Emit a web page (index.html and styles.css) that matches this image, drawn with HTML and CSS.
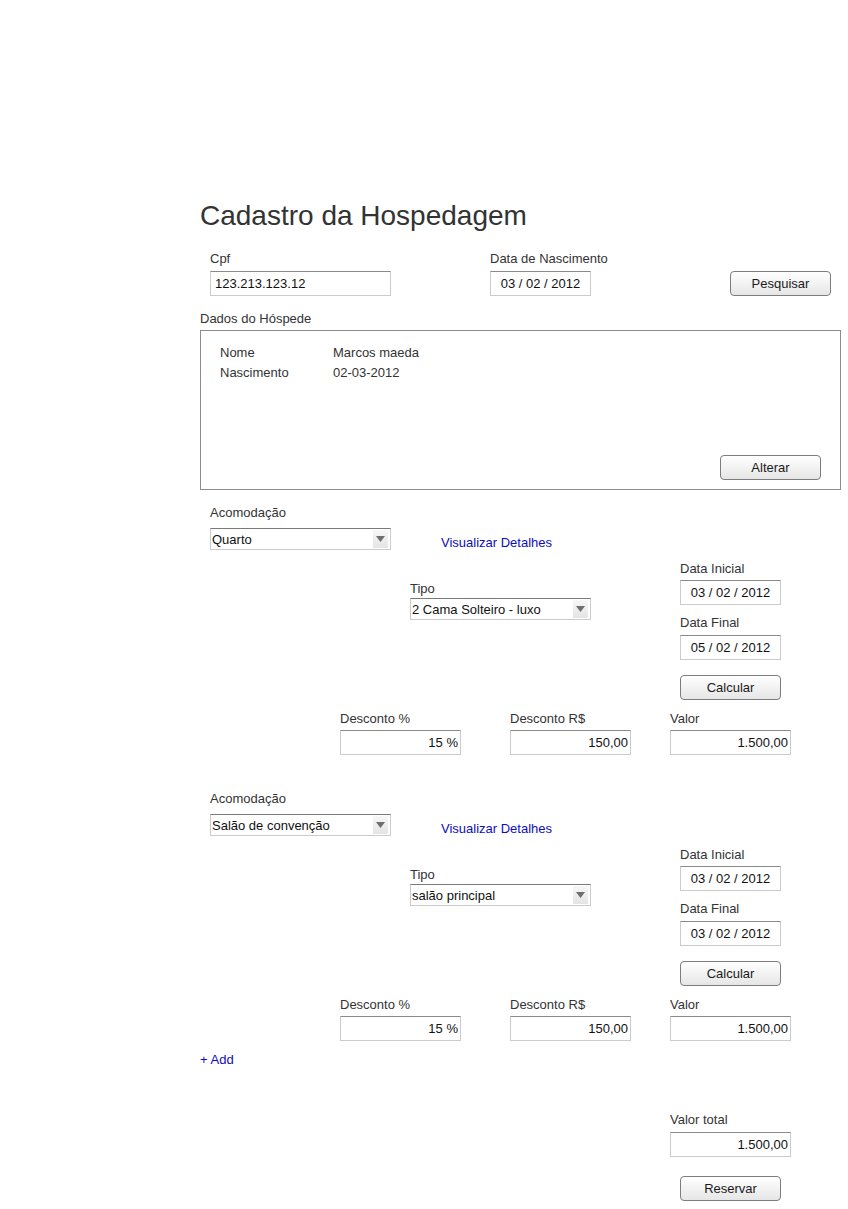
FILE: index.html
```html
<!DOCTYPE html>
<html lang="pt-BR">
<head>
<meta charset="utf-8">
<title>Cadastro da Hospedagem</title>
<link rel="stylesheet" href="styles.css">
</head>
<body>
<div class="page">
  <h1 class="title">Cadastro da Hospedagem</h1>

  <div class="search-row">
    <div class="field f-cpf">
      <div class="lbl lbl-top">Cpf</div>
      <div class="input w-cpf">123.213.123.12</div>
    </div>
    <div class="field f-nasc">
      <div class="lbl lbl-top">Data de Nascimento</div>
      <div class="input date">03 / 02 / 2012</div>
    </div>
    <button class="btn">Pesquisar</button>
  </div>

  <div class="lbl guest-lbl">Dados do Hóspede</div>
  <div class="guest-box">
    <div class="guest-data">
      <span>Nome</span><span>Marcos maeda</span>
      <span>Nascimento</span><span>02-03-2012</span>
    </div>
    <button class="btn btn-end">Alterar</button>
  </div>

  <section class="acc acc-first">
    <div class="acc-top">
      <div class="field">
        <div class="lbl lbl-sel">Acomodação</div>
        <div class="select w-sel"><span>Quarto</span><span class="arrow"><svg width="9" height="6" viewBox="0 0 9 6"><polygon points="0,0 9,0 4.5,6" fill="#6e6e6e"/></svg></span></div>
      </div>
      <a class="link details">Visualizar Detalhes</a>
    </div>
    <div class="acc-mid">
      <div class="field f-tipo">
        <div class="lbl lbl-tipo">Tipo</div>
        <div class="select w-sel"><span>2 Cama Solteiro - luxo</span><span class="arrow"><svg width="9" height="6" viewBox="0 0 9 6"><polygon points="0,0 9,0 4.5,6" fill="#6e6e6e"/></svg></span></div>
      </div>
      <div class="dates">
        <div class="lbl">Data Inicial</div>
        <div class="input date">03 / 02 / 2012</div>
        <div class="lbl lbl-final">Data Final</div>
        <div class="input date">05 / 02 / 2012</div>
        <button class="btn btn-calc">Calcular</button>
      </div>
    </div>
    <div class="acc-bottom">
      <div class="field f-dp">
        <div class="lbl lbl-disc">Desconto %</div>
        <div class="input num">15 %</div>
      </div>
      <div class="field f-dr">
        <div class="lbl lbl-disc">Desconto R$</div>
        <div class="input num">150,00</div>
      </div>
      <div class="field">
        <div class="lbl lbl-disc">Valor</div>
        <div class="input num">1.500,00</div>
      </div>
    </div>
  </section>

  <section class="acc acc-next">
    <div class="acc-top">
      <div class="field">
        <div class="lbl lbl-sel">Acomodação</div>
        <div class="select w-sel"><span>Salão de convenção</span><span class="arrow"><svg width="9" height="6" viewBox="0 0 9 6"><polygon points="0,0 9,0 4.5,6" fill="#6e6e6e"/></svg></span></div>
      </div>
      <a class="link details">Visualizar Detalhes</a>
    </div>
    <div class="acc-mid">
      <div class="field f-tipo">
        <div class="lbl lbl-tipo">Tipo</div>
        <div class="select w-sel"><span>salão principal</span><span class="arrow"><svg width="9" height="6" viewBox="0 0 9 6"><polygon points="0,0 9,0 4.5,6" fill="#6e6e6e"/></svg></span></div>
      </div>
      <div class="dates">
        <div class="lbl">Data Inicial</div>
        <div class="input date">03 / 02 / 2012</div>
        <div class="lbl lbl-final">Data Final</div>
        <div class="input date">03 / 02 / 2012</div>
        <button class="btn btn-calc">Calcular</button>
      </div>
    </div>
    <div class="acc-bottom">
      <div class="field f-dp">
        <div class="lbl lbl-disc">Desconto %</div>
        <div class="input num">15 %</div>
      </div>
      <div class="field f-dr">
        <div class="lbl lbl-disc">Desconto R$</div>
        <div class="input num">150,00</div>
      </div>
      <div class="field">
        <div class="lbl lbl-disc">Valor</div>
        <div class="input num">1.500,00</div>
      </div>
    </div>
  </section>

  <a class="link add">+ Add</a>

  <div class="total">
    <div class="lbl lbl-val">Valor total</div>
    <div class="input num">1.500,00</div>
    <button class="btn btn-reserve">Reservar</button>
  </div>
</div>
</body>
</html>
```

FILE: styles.css
```css
* {
  box-sizing: border-box;
}

body {
  margin: 0;
  background: #ffffff;
  font-family: "Liberation Sans", Arial, sans-serif;
  font-size: 13px;
  color: #333333;
}

.page {
  margin-left: 200px;
  width: 641px;
  padding-top: 200px;
}

.title {
  margin: 0;
  font-size: 28px;
  line-height: 32px;
  font-weight: normal;
  color: #333333;
  white-space: nowrap;
}

.lbl {
  line-height: 16px;
  margin-bottom: 3px;
  white-space: nowrap;
  color: #333333;
}

.field {
  display: flex;
  flex-direction: column;
  align-items: flex-start;
}

.input {
  height: 25px;
  line-height: 24px;
  border: 1px solid #cbcbcb;
  border-top-color: #8a8a8a;
  background: #ffffff;
  color: #111111;
  padding: 0 4px;
  white-space: nowrap;
}

.w-cpf {
  width: 181px;
}

.input.date {
  width: 101px;
  padding: 0;
  text-align: center;
}

.input.num {
  width: 121px;
  padding: 0 2px;
  text-align: right;
}

.select {
  display: flex;
  align-items: center;
  justify-content: space-between;
  height: 22px;
  border: 1px solid #cbcbcb;
  border-top-color: #7a7a7a;
  padding: 0 2px 0 1px;
  color: #111111;
  white-space: nowrap;
}

.w-sel {
  width: 181px;
}

.select .arrow {
  width: 15px;
  height: 18px;
  display: flex;
  align-items: center;
  justify-content: center;
  background: linear-gradient(#f7f7f7, #e4e4e4);
}

.btn {
  width: 101px;
  height: 25px;
  border: 1px solid #7d7d7d;
  border-radius: 4px;
  background: linear-gradient(#ffffff, #e6e6e6);
  font-family: inherit;
  font-size: 13px;
  color: #1a1a1a;
  padding: 0;
}

.link {
  color: #0c0cc0;
  line-height: 16px;
  white-space: nowrap;
  text-decoration: none;
}

/* search row */
.search-row {
  display: flex;
  align-items: flex-end;
  margin-top: 19px;
  padding-left: 10px;
}

.lbl-top {
  margin-bottom: 4px;
}

.f-cpf {
  width: 280px;
}

.f-nasc {
  width: 240px;
}

/* guest box */
.guest-lbl {
  margin-top: 15px;
}

.guest-box {
  height: 160px;
  border: 1px solid #8c8c8c;
  padding: 12px 19px 9px 19px;
  display: flex;
  flex-direction: column;
}

.guest-data {
  display: grid;
  grid-template-columns: 113px auto;
  line-height: 20px;
  color: #333333;
}

.btn-end {
  margin-top: auto;
  align-self: flex-end;
}

/* accommodation sections */
.acc-first {
  margin-top: 15px;
}

.acc-next {
  margin-top: 36px;
}

.acc-top {
  display: flex;
  align-items: flex-end;
  padding-left: 10px;
}

.lbl-sel {
  margin-bottom: 7px;
}

.details {
  margin-left: 50px;
  margin-bottom: -1px;
}

.acc-mid {
  display: flex;
  margin-top: 11px;
  padding-left: 210px;
}

.f-tipo {
  width: 270px;
  padding-top: 20px;
}

.lbl-tipo {
  margin-bottom: 1px;
}

.dates {
  display: flex;
  flex-direction: column;
  align-items: flex-start;
}

.lbl-final {
  margin-top: 10px;
  margin-bottom: 4px;
}

.btn-calc {
  margin-top: 15px;
}

.acc-bottom {
  display: flex;
  margin-top: 11px;
  padding-left: 140px;
}

.lbl-disc {
  margin-bottom: 3px;
}

.lbl-val {
  margin-bottom: 4px;
}

.f-dp {
  width: 170px;
}

.f-dr {
  width: 160px;
}

/* add + total */
.add {
  display: block;
  margin-top: 11px;
  width: max-content;
}

.total {
  display: flex;
  flex-direction: column;
  align-items: flex-start;
  margin-top: 44px;
  padding-left: 470px;
}

.btn-reserve {
  margin-top: 19px;
  margin-left: 10px;
}
```
